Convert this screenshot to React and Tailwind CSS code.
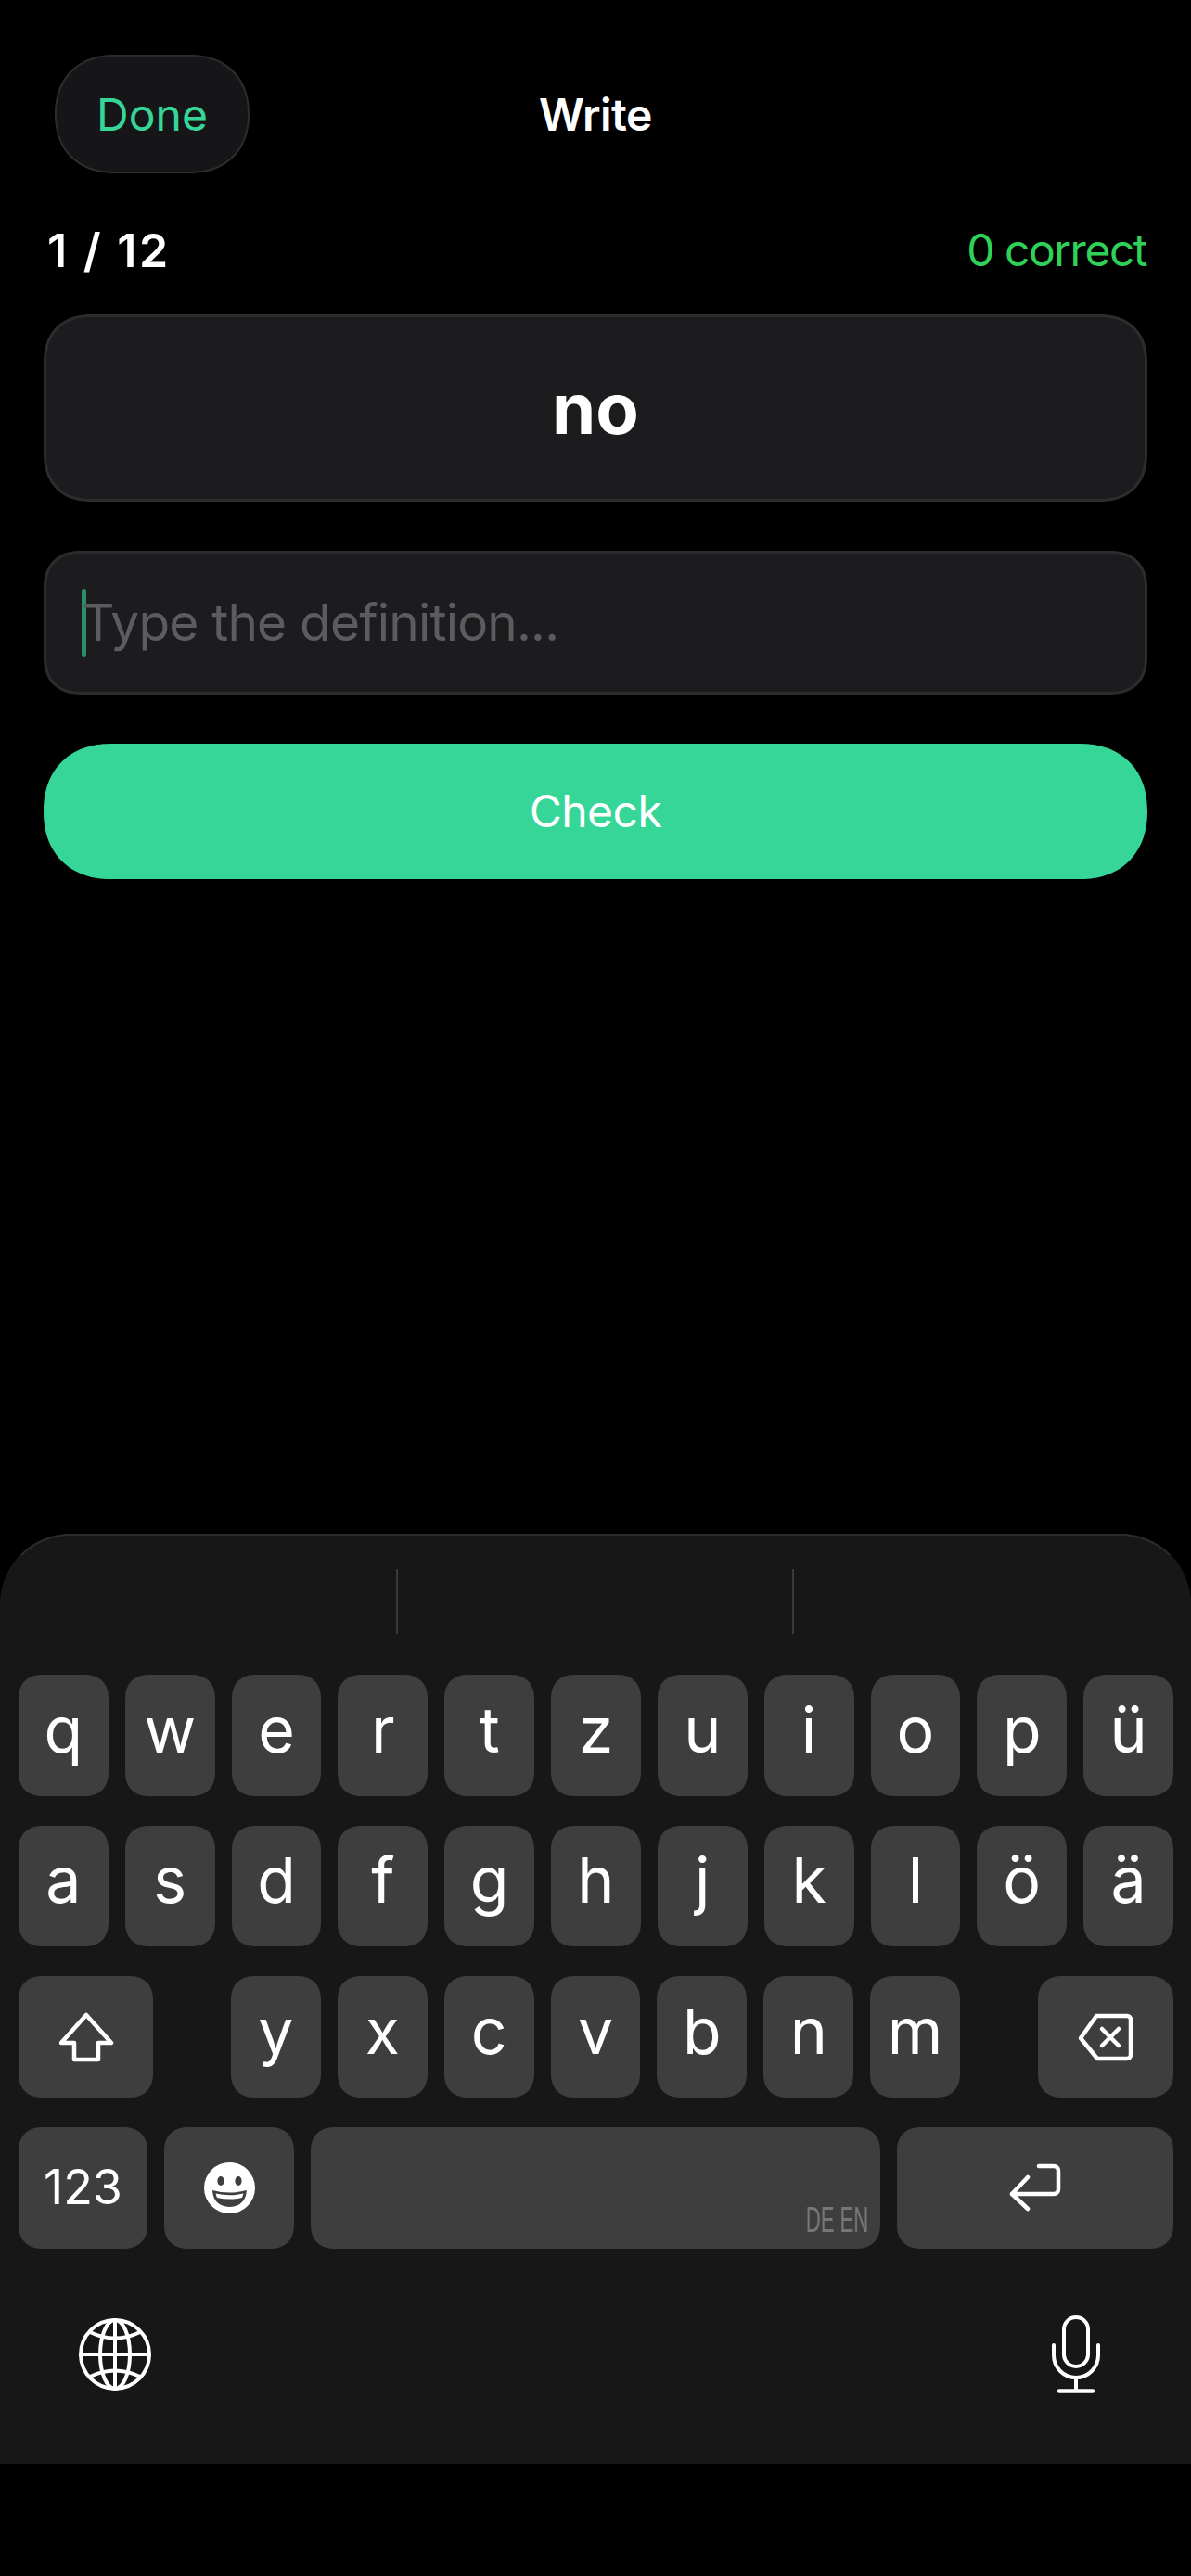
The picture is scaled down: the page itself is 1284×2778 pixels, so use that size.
const ROW_ONE = ['q', 'w', 'e', 'r', 't', 'z', 'u', 'i', 'o', 'p', 'ü'];
const ROW_TWO = ['a', 's', 'd', 'f', 'g', 'h', 'j', 'k', 'l', 'ö', 'ä'];
const ROW_THREE = ['y', 'x', 'c', 'v', 'b', 'n', 'm'];

const ShiftIcon = () => (
    <svg width="60" height="54" viewBox="0 0 60 54" fill="none" stroke="white" strokeWidth="4.5" strokeLinejoin="round">
        <path d="M30 3 L57 33 H43 V51 H17 V33 H3 Z" />
    </svg>
);

const DeleteIcon = () => (
    <svg width="60" height="52" viewBox="0 0 60 52" fill="none" stroke="white" strokeWidth="4.5" strokeLinejoin="round" strokeLinecap="round">
        <path d="M20 3 H53 a4 4 0 0 1 4 4 V45 a4 4 0 0 1 -4 4 H21 L3 27 Z" />
        <path d="M26 17 L44 35 M44 17 L26 35" />
    </svg>
);

const ReturnIcon = () => (
    <svg width="58" height="52" viewBox="0 0 58 52" fill="none" stroke="white" strokeWidth="4.5" strokeLinejoin="round" strokeLinecap="round">
        <path d="M33 3 H49 a5 5 0 0 1 5 5 V28 a5 5 0 0 1 -5 5 H4" />
        <path d="M21 15 L4 33 L21 49" />
    </svg>
);

const EmojiIcon = () => (
    <svg width="55" height="55" viewBox="0 0 55 55">
        <circle cx="27.5" cy="27.5" r="27.5" fill="white" />
        <ellipse cx="18" cy="20" rx="3.6" ry="5" fill="#3e3e3e" />
        <ellipse cx="37" cy="20" rx="3.6" ry="5" fill="#3e3e3e" />
        <path d="M9 30 Q27.5 35 46 30 Q45 47 27.5 48 Q10 47 9 30 Z" fill="#3e3e3e" />
        <path d="M12.5 33.5 Q27.5 37 42.5 33.5 L41 38 Q27.5 41 14 38 Z" fill="white" />
    </svg>
);

const GlobeIcon = () => (
    <svg width="80" height="80" viewBox="-40 -40 80 80" fill="none" stroke="white" strokeWidth="4">
        <circle cx="0" cy="0" r="37" />
        <ellipse cx="0" cy="0" rx="16" ry="37" />
        <path d="M0 -37 V37 M-37 0 H37" />
        <path d="M-27 -24 Q0 -11 27 -24" />
        <path d="M-27 24 Q0 11 27 24" />
    </svg>
);

const MicIcon = () => (
    <svg width="58" height="84" viewBox="0 0 58 84" fill="none" stroke="white" strokeWidth="4" strokeLinecap="round">
        <rect x="16" y="2" width="26" height="53" rx="13" />
        <path d="M5 32 V43 a24 24 0 0 0 48 0 V32" />
        <path d="M29 67 V81" />
        <path d="M11 81.5 H47" strokeWidth="4.5" />
    </svg>
);

// one grey keyboard key
const Key = ({ className = '', children }) => (
    <div className={`h-[130.67px] bg-[#3e3e3e] rounded-[26px] [corner-shape:superellipse(1.2)] flex items-center justify-center text-white ${className}`}>
        {children}
    </div>
);

const LetterKey = ({ letter }) => (
    <Key className="flex-1 min-w-0 text-[68px] leading-none">
        <span className="pb-[13px]">{letter}</span>
    </Key>
);

export default function App() {
    return (
        <div className="w-[1284px] h-[2778px] bg-black flex flex-col font-['Inter',sans-serif] overflow-hidden">
            {/* HEADER */}
            <div className="grid grid-cols-[1fr_auto_1fr] items-center pl-[59px] pr-[59px] pt-[59px]">
                <div>
                    <button className="w-[210px] h-[128px] rounded-[64px] [corner-shape:superellipse(1.15)] bg-[#161618] border-2 border-[#2c2c2e] text-[#36d699] text-[48px] leading-none pt-[2px]">
                        Done
                    </button>
                </div>
                <div className="text-white text-[48px] font-semibold tracking-[-0.5px] leading-none pt-[2px]">Write</div>
                <div />
            </div>

            {/* PROGRESS */}
            <div className="flex justify-between items-center pl-[51px] pr-[48px] mt-[53px] h-[60px]">
                <span className="text-white text-[50px] font-semibold tracking-[2.5px] leading-none">1 / 12</span>
                <span className="text-[#30d158] text-[48px] tracking-[-1.5px] leading-none">0 correct</span>
            </div>

            {/* CARD AND INPUT */}
            <div className="flex flex-col px-[47px] mt-[39px]">
                <div className="h-[202px] rounded-[52px] [corner-shape:superellipse(1.2)] bg-[#1c1c1e] border-[3px] border-[#2c2c2e] flex items-center justify-center text-white text-[76px] font-bold leading-none">
                    no
                </div>
                <div className="mt-[53px] h-[155px] rounded-[40px] [corner-shape:superellipse(1.2)] bg-[#1c1c1e] border-[3px] border-[#2c2c2e] flex items-center pl-[38px] text-[#5c5c5e] text-[55px] tracking-[-0.8px] leading-none">
                    <div className="w-[5px] h-[73px] rounded-full bg-[#2a8f68] shrink-0" />
                    <span className="-ml-[5px]">Type the definition...</span>
                </div>
                <button className="mt-[53px] h-[146px] rounded-[73px] [corner-shape:superellipse(1.15)] bg-[#36d699] text-white text-[48px] tracking-[-0.5px] leading-none">
                    Check
                </button>
            </div>

            {/* KEYBOARD */}
            <div className="mt-auto mb-[121px] h-[1003px] bg-[#171717] rounded-t-[76px] border-t-2 border-x-2 border-t-[#2c2c2e] border-x-transparent flex flex-col">
                <div className="flex justify-center mt-[36px] h-[70px] -ml-[2px]">
                    <div className="w-[2px] h-full bg-[#3a3a3a]" />
                    <div className="w-[425px]" />
                    <div className="w-[2px] h-full bg-[#3a3a3a]" />
                </div>

                <div className="flex flex-col gap-[32px] mt-[44px] pl-[18px] pr-[17px]">
                    <div className="flex gap-[18px]">
                        {ROW_ONE.map((letter) => <LetterKey key={letter} letter={letter} />)}
                    </div>
                    <div className="flex gap-[18px]">
                        {ROW_TWO.map((letter) => <LetterKey key={letter} letter={letter} />)}
                    </div>
                    <div className="flex justify-between">
                        <Key className="w-[145px]"><ShiftIcon /></Key>
                        <div className="flex gap-[18px] w-[786px]">
                            {ROW_THREE.map((letter) => <LetterKey key={letter} letter={letter} />)}
                        </div>
                        <Key className="w-[146px]"><DeleteIcon /></Key>
                    </div>
                    <div className="flex gap-[18px]">
                        <Key className="w-[139px] text-[52px] leading-none">123</Key>
                        <Key className="w-[140px]"><EmojiIcon /></Key>
                        <Key className="flex-1 relative">
                            <span className="absolute right-[13px] bottom-[12px] font-['Liberation_Sans',sans-serif] text-[38px] leading-none text-[#777777] whitespace-nowrap scale-x-[0.58] origin-right">
                                DE EN
                            </span>
                        </Key>
                        <Key className="w-[298px]"><ReturnIcon /></Key>
                    </div>
                </div>

                <div className="flex justify-between items-center pl-[82px] pr-[93px] mt-[72px]">
                    <GlobeIcon />
                    <MicIcon />
                </div>
            </div>
        </div>
    );
}
